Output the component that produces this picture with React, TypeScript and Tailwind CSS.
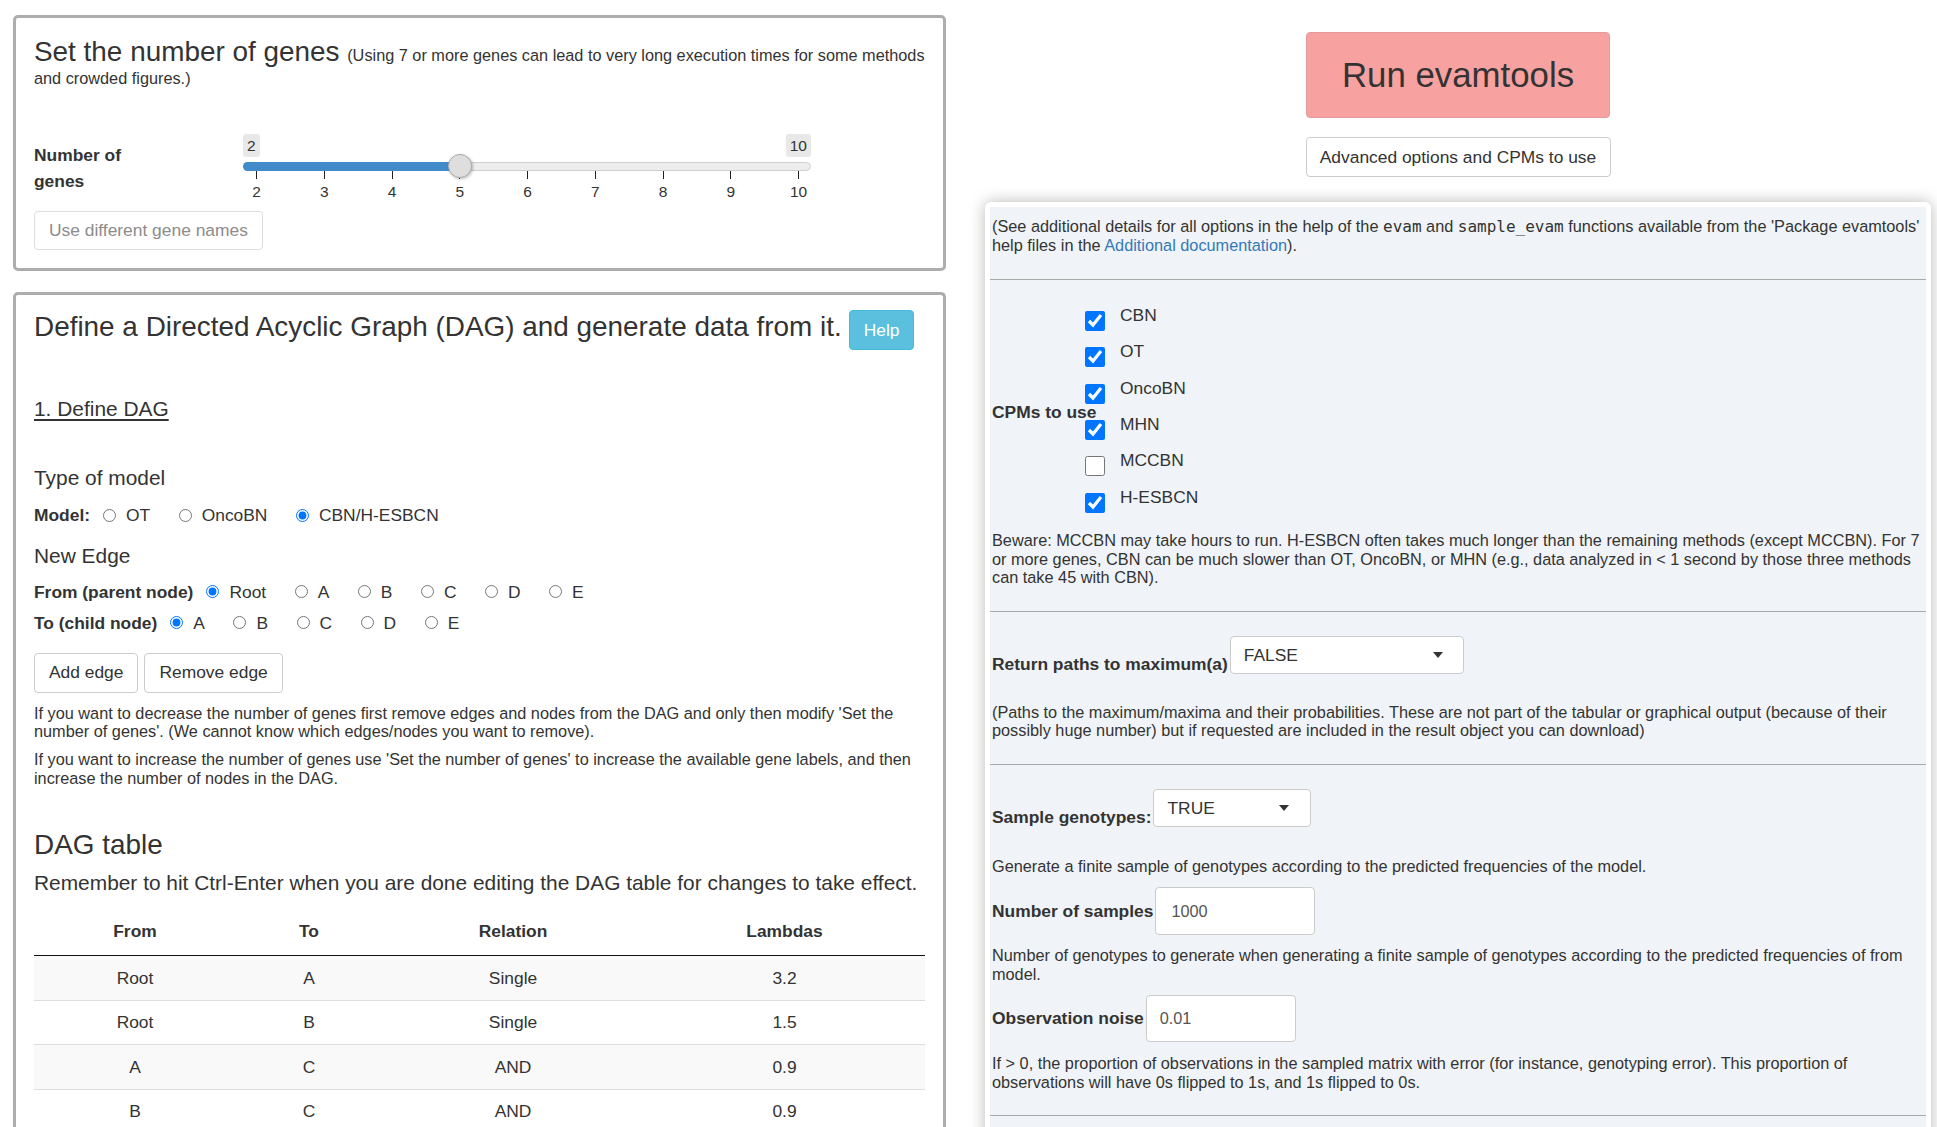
import React from "react";

function Radio({ label, checked, name }: { label: string; checked?: boolean; name: string }) {
  return (
    <label className="flex items-center mr-[28.5px]">
      <input type="radio" name={name} defaultChecked={checked} className="m-0 w-[13px] h-[13px]" />
      <span className="ml-[10px]">{label}</span>
    </label>
  );
}

function Slider() {
  const ticks = [2, 3, 4, 5, 6, 7, 8, 9, 10];
  return (
    <div className="relative w-[568px] h-[70px]">
      <div className="absolute left-0 top-[2px] h-[23px] px-[4px] bg-[#e8e8e8] rounded-[3px] text-[15.5px] leading-[23px]">2</div>
      <div className="absolute right-0 top-[2px] h-[23px] px-[4px] bg-[#e8e8e8] rounded-[3px] text-[15.5px] leading-[23px]">10</div>
      <div className="absolute left-0 right-0 top-[30px] h-[9px] rounded-full bg-[#ededed] border border-[#cfcfcf]" />
      <div className="absolute left-0 top-[30px] h-[9px] w-[220px] rounded-l-full bg-[#428bca]" />
      {ticks.map((t, i) => (
        <div key={t}>
          <div className="absolute top-[39px] h-[8px] w-px bg-[#222]" style={{ left: 13 + i * 67.75 }} />
          <div
            className="absolute top-[50px] leading-[20px] text-[15.5px] -translate-x-1/2"
            style={{ left: 13.5 + i * 67.75 }}
          >
            {t}
          </div>
        </div>
      ))}
      <div className="absolute left-[205px] top-[22px] w-[24px] h-[24px] rounded-full bg-[#dedede] border border-[#ababab] shadow-[1px_1px_3px_rgba(0,0,0,0.25)]" />
    </div>
  );
}

function Caret() {
  return (
    <svg width="10" height="6" viewBox="0 0 10 6" className="shrink-0">
      <polygon points="0,0 10,0 5,6" fill="#333" />
    </svg>
  );
}

const Mono = ({ children }: { children: React.ReactNode }) => (
  <span className="font-['DejaVu_Sans_Mono',monospace] text-[16px]">{children}</span>
);

export default function App() {
  const rows = [
    ["Root", "A", "Single", "3.2"],
    ["Root", "B", "Single", "1.5"],
    ["A", "C", "AND", "0.9"],
    ["B", "C", "AND", "0.9"],
  ];
  const cpms: [string, boolean][] = [
    ["CBN", true],
    ["OT", true],
    ["OncoBN", true],
    ["MHN", true],
    ["MCCBN", false],
    ["H-ESBCN", true],
  ];
  const para = "text-[16.3px] leading-[18.4px]";
  const btn = "h-[40px] px-[14px] bg-white border border-[#ccc] rounded-[4px] text-[17.4px] text-[#333]";
  return (
    <div className="min-h-[1127px] bg-white text-[#333] font-['Liberation_Sans',Arial,sans-serif] flex items-start">
      {/* LEFT COLUMN */}
      <div className="ml-[13px] mt-[15px] w-[933px] shrink-0 flex flex-col gap-[21px]">
        {/* Panel 1 */}
        <div className="border-[3px] border-[#adadad] rounded-[5px] pt-[22px] pb-[18px] px-[18px] flex flex-col items-start">
          <div className="leading-[23px] text-[16.3px]">
            <span className="text-[27.9px]">Set the number of genes </span>
            <span>(Using 7 or more genes can lead to very long execution times for some methods and crowded figures.)</span>
          </div>
          <div className="mt-[42px] flex items-start">
            <div className="w-[209px] mt-[10px] font-bold text-[17.4px] leading-[26px]">
              Number of
              <br />
              genes
            </div>
            <Slider />
          </div>
          <button className="mt-[9px] h-[39px] px-[14px] bg-white border border-[#dedede] rounded-[4px] text-[17.4px] text-[#8c8c8c]">
            Use different gene names
          </button>
        </div>

        {/* Panel 2 */}
        <div className="border-[3px] border-[#adadad] border-b-0 rounded-t-[5px] pt-[15px] pb-[10px] px-[18px] flex flex-col items-start">
          <div className="flex items-baseline">
            <span className="text-[27.9px] leading-[30px]">Define a Directed Acyclic Graph (DAG) and generate data from it.</span>
            <span className="ml-[7px] h-[40px] px-[14px] flex items-center bg-[#5bc0de] border border-[#46b8da] rounded-[4px] text-white text-[17.4px]">
              Help
            </span>
          </div>
          <div className="mt-[47px] text-[20.9px] leading-[24px] underline underline-offset-[3px]">1. Define DAG</div>
          <div className="mt-[45px] text-[20.9px] leading-[24px]">Type of model</div>
          <div className="mt-[15px] flex items-center text-[17.4px] leading-[20px]">
            <span className="font-bold mr-[13px]">Model:</span>
            <Radio name="model" label="OT" />
            <Radio name="model" label="OncoBN" />
            <Radio name="model" label="CBN/H-ESBCN" checked />
          </div>
          <div className="mt-[19px] text-[20.9px] leading-[24px]">New Edge</div>
          <div className="mt-[13.5px] flex items-center text-[17.4px] leading-[20px]">
            <span className="font-bold mr-[13px]">From (parent node)</span>
            <Radio name="from" label="Root" checked />
            <Radio name="from" label="A" />
            <Radio name="from" label="B" />
            <Radio name="from" label="C" />
            <Radio name="from" label="D" />
            <Radio name="from" label="E" />
          </div>
          <div className="mt-[11px] flex items-center text-[17.4px] leading-[20px]">
            <span className="font-bold mr-[13px]">To (child node)</span>
            <Radio name="to" label="A" checked />
            <Radio name="to" label="B" />
            <Radio name="to" label="C" />
            <Radio name="to" label="D" />
            <Radio name="to" label="E" />
          </div>
          <div className="mt-[20px] flex gap-[6px]">
            <button className={btn}>Add edge</button>
            <button className={btn}>Remove edge</button>
          </div>
          <p className={`mt-[11px] ${para}`}>
            If you want to decrease the number of genes first remove edges and nodes from the DAG and only then modify 'Set the number of genes'. (We cannot know which edges/nodes you want to remove).
          </p>
          <p className={`mt-[10px] ${para}`}>
            If you want to increase the number of genes use 'Set the number of genes' to increase the available gene labels, and then increase the number of nodes in the DAG.
          </p>
          <div className="mt-[43px] text-[27.9px] leading-[30px]">DAG table</div>
          <div className="mt-[11px] text-[20.9px] leading-[24px]">
            Remember to hit Ctrl-Enter when you are done editing the DAG table for changes to take effect.
          </div>
          <div className="mt-[12px] w-[891px] text-[17.4px]">
            <div className="grid grid-cols-[202px_146px_262px_281px] h-[49px] items-center border-b border-[#111] font-bold text-center">
              <div>From</div>
              <div>To</div>
              <div>Relation</div>
              <div>Lambdas</div>
            </div>
            {rows.map((r, i) => (
              <div
                key={i}
                className={`grid grid-cols-[202px_146px_262px_281px] items-center text-center ${
                  i === 0 ? "h-[43.5px]" : "h-[44.5px] border-t border-[#ddd]"
                } ${i % 2 === 0 ? "bg-[#f9f9f9]" : "bg-white"}`}
              >
                {r.map((c, j) => (
                  <div key={j}>{c}</div>
                ))}
              </div>
            ))}
          </div>
        </div>
      </div>

      {/* RIGHT COLUMN */}
      <div className="ml-[39px] w-[946px] shrink-0 flex flex-col items-center">
        <button className="mt-[32px] w-[304px] h-[86px] bg-[#f8a1a1] border border-[#e49b9b] rounded-[4px] text-[34.8px] text-[#333]">
          Run evamtools
        </button>
        <button className="mt-[19px] w-[305px] h-[40px] bg-white border border-[#ccc] rounded-[4px] text-[17.4px] text-[#333]">
          Advanced options and CPMs to use
        </button>
        <div className="mt-[25px] w-[946px] bg-white rounded-[6px] p-[5px] shadow-[0_0_16px_rgba(0,0,0,0.28)]">
          <div className="bg-[#f0f3f7] pt-[10px] pb-[80px] flex flex-col items-stretch">
            <div className="pl-[2px] flex flex-col items-stretch">
              <p className={para}>
                (See additional details for all options in the help of the <Mono>evam</Mono> and <Mono>sample_evam</Mono> functions available from the 'Package evamtools' help files in the{" "}
                <span className="text-[#337ab7]">Additional documentation</span>).
              </p>
            </div>
            <div className="mt-[24px] h-px bg-[#a8a8a8]" />
            <div className="pl-[2px] flex flex-col items-stretch">
              <div className="mt-[23px] flex items-center">
                <div className="w-[93px] shrink-0 whitespace-nowrap font-bold text-[17.4px] leading-[20px]">CPMs to use</div>
                <div className="flex flex-col">
                  {cpms.map(([n, c]) => (
                    <div key={n} className="h-[36.4px] flex items-start">
                      <div className="pt-[8px]">
                        <input type="checkbox" defaultChecked={c} className="m-0 w-[20px] h-[20px] block" />
                      </div>
                      <span className="ml-[15px] mt-[2px] text-[17.4px] leading-[20px]">{n}</span>
                    </div>
                  ))}
                </div>
              </div>
              <p className={`mt-[10px] ${para}`}>
                Beware: MCCBN may take hours to run. H-ESBCN often takes much longer than the remaining methods (except MCCBN). For 7 or more genes, CBN can be much slower than OT, OncoBN, or MHN (e.g., data analyzed in &lt; 1 second by those three methods can take 45 with CBN).
              </p>
            </div>
            <div className="mt-[25px] h-px bg-[#a8a8a8]" />
            <div className="pl-[2px] flex flex-col items-stretch">
              <div className="mt-[24px] flex items-end">
                <span className="font-bold text-[17.4px] leading-[19px]">Return paths to maximum(a)</span>
                <div className="ml-[2px] w-[234px] h-[38px] bg-white border border-[#ccc] rounded-[4px] flex items-center justify-between pl-[13px] pr-[20px] text-[17.4px]">
                  <span>FALSE</span>
                  <Caret />
                </div>
              </div>
              <p className={`mt-[28.5px] ${para}`}>
                (Paths to the maximum/maxima and their probabilities. These are not part of the tabular or graphical output (because of their possibly huge number) but if requested are included in the result object you can download)
              </p>
            </div>
            <div className="mt-[24px] h-px bg-[#a8a8a8]" />
            <div className="pl-[2px] flex flex-col items-stretch">
              <div className="mt-[24.5px] flex items-end">
                <span className="font-bold text-[17.4px] leading-[19px]">Sample genotypes:</span>
                <div className="ml-[2px] w-[158px] h-[38px] bg-white border border-[#ccc] rounded-[4px] flex items-center justify-between pl-[13px] pr-[21px] text-[17.4px]">
                  <span>TRUE</span>
                  <Caret />
                </div>
              </div>
              <p className={`mt-[29.5px] ${para}`}>
                Generate a finite sample of genotypes according to the predicted frequencies of the model.
              </p>
              <div className="mt-[12px] flex items-center">
                <span className="font-bold text-[17.4px] leading-[20px]">Number of samples</span>
                <div className="ml-[2px] w-[160px] h-[48px] bg-white border border-[#ccc] rounded-[4px] flex items-center pl-[15px] text-[16.3px] text-[#555]">
                  1000
                </div>
              </div>
              <p className={`mt-[11px] ${para}`}>
                Number of genotypes to generate when generating a finite sample of genotypes according to the predicted frequencies of from model.
              </p>
              <div className="mt-[12px] flex items-center">
                <span className="font-bold text-[17.4px] leading-[20px]">Observation noise</span>
                <div className="ml-[2px] w-[150px] h-[47px] bg-white border border-[#ccc] rounded-[4px] flex items-center pl-[13px] text-[16.3px] text-[#555]">
                  0.01
                </div>
              </div>
              <p className={`mt-[12.5px] ${para}`}>
                If &gt; 0, the proportion of observations in the sampled matrix with error (for instance, genotyping error). This proportion of observations will have 0s flipped to 1s, and 1s flipped to 0s.
              </p>
            </div>
            <div className="mt-[23.5px] h-px bg-[#a8a8a8]" />
          </div>
        </div>
      </div>
    </div>
  );
}
